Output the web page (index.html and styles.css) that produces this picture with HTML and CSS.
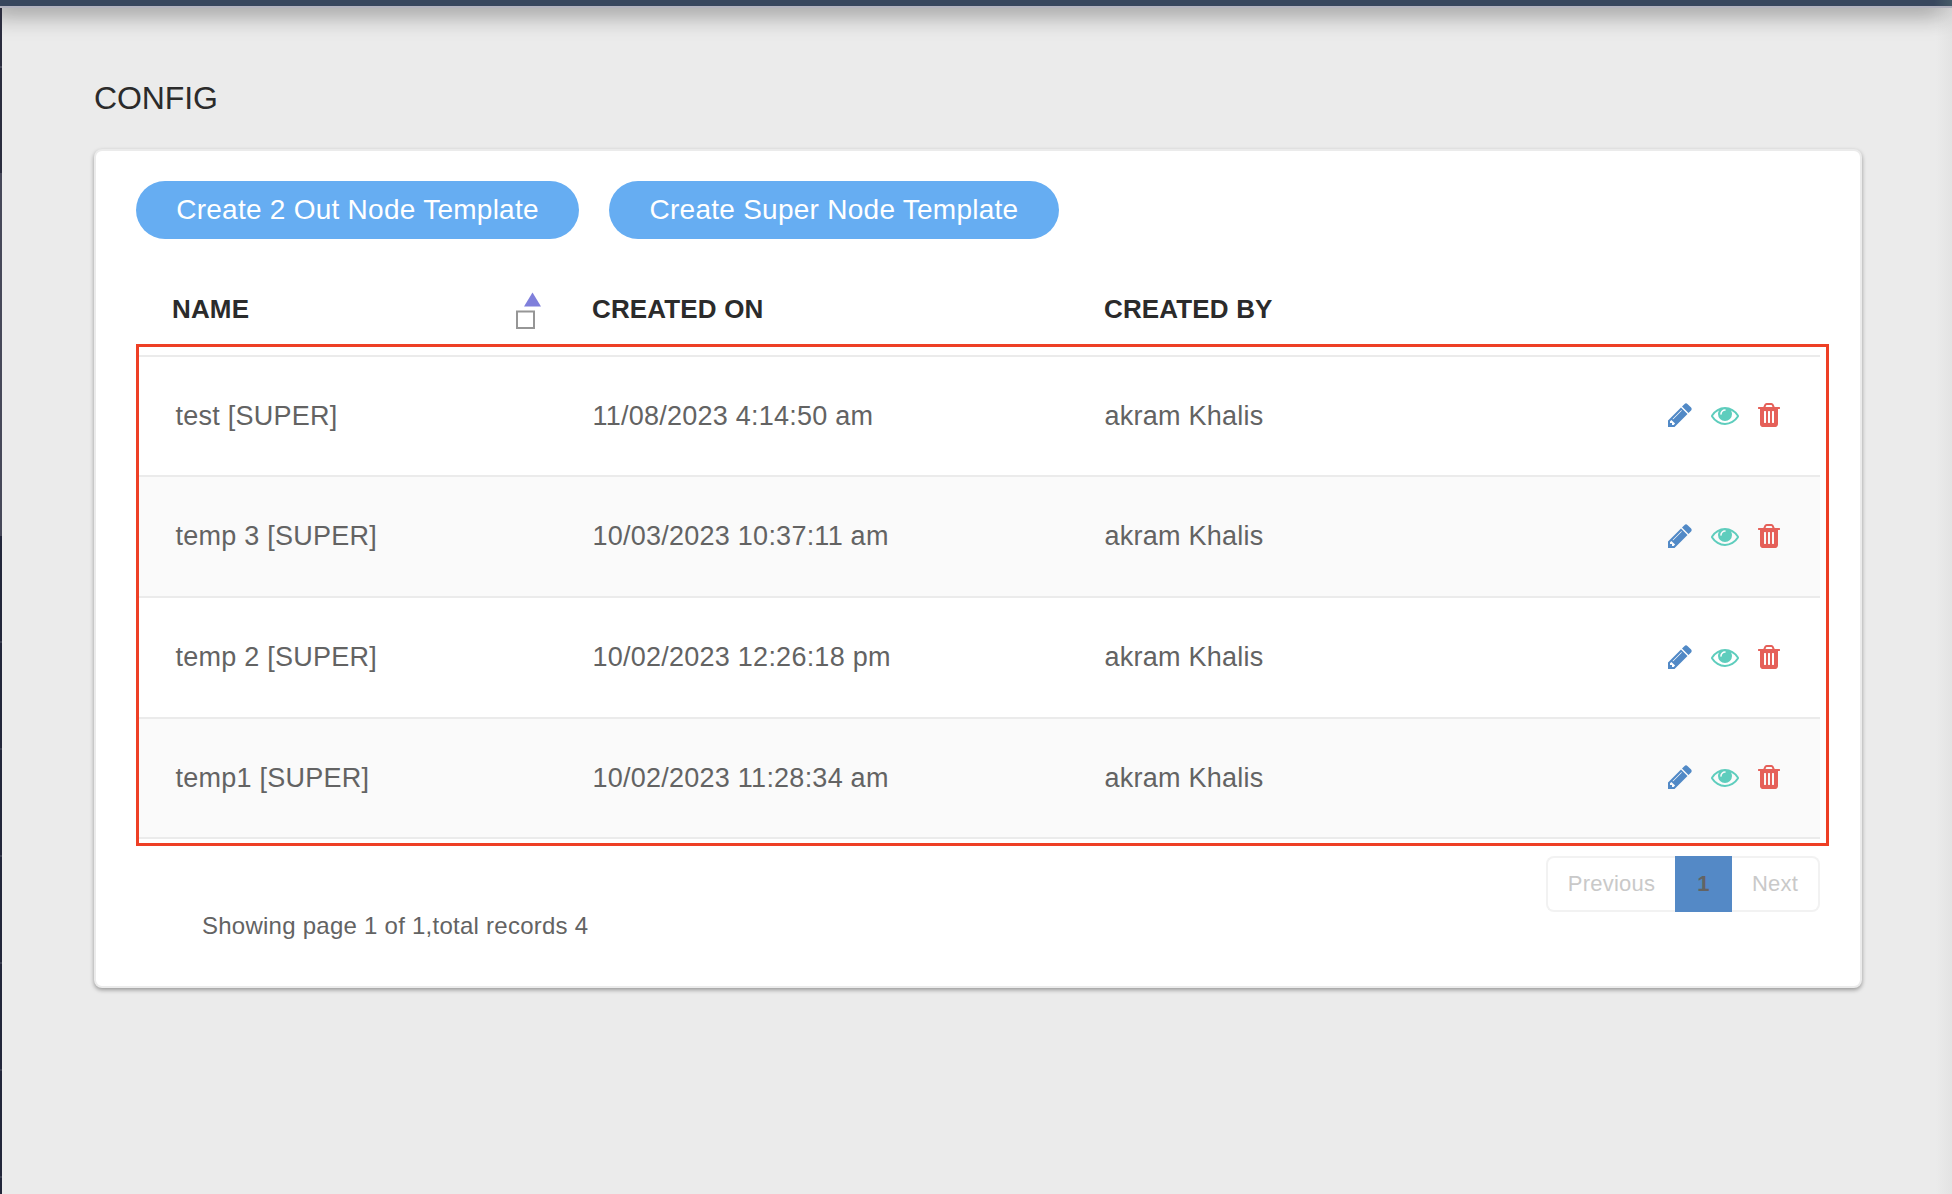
FILE: index.html
```html
<!DOCTYPE html>
<html lang="en">
<head>
<meta charset="utf-8">
<title>Config</title>
<link rel="stylesheet" href="styles.css">
</head>
<body>
<svg class="sprite" aria-hidden="true">
<symbol id="pencil" viewBox="0 0 1792 1792"><path d="M491 1536l91-91-235-235-91 91v107h128v128h107zm523-928q0-22-22-22-10 0-17 7l-542 542q-7 7-7 17 0 22 22 22 10 0 17-7l542-542q7-7 7-17zm-54-192l416 416-832 832h-416v-416zm683 96q0 53-37 90l-166 166-416-416 166-165q36-38 90-38 53 0 91 38l235 234q37 39 37 91z"/></symbol>
<symbol id="eye" viewBox="0 0 1792 1792"><path d="M1664 960q-152-236-381-353 61 104 61 225 0 185-131.5 316.5t-316.5 131.5-316.5-131.5-131.5-316.5q0-121 61-225-229 117-381 353 133 205 333.5 326.5t434.5 121.5 434.5-121.5 333.5-326.5zm-720-384q0-20-14-34t-34-14q-125 0-214.5 89.5t-89.5 214.5q0 20 14 34t34 14 34-14 14-34q0-86 61-147t147-61q20 0 34-14t14-34zm848 384q0 34-20 69-140 230-376.5 368.5t-499.5 138.5-499.5-139-376.5-368q-20-35-20-69t20-69q140-229 376.5-368t499.5-139 499.5 139 376.5 368q20 35 20 69z"/></symbol>
<symbol id="trash" viewBox="0 0 1792 1792"><path d="M704 1376v-704q0-14-9-23t-23-9h-64q-14 0-23 9t-9 23v704q0 14 9 23t23 9h64q14 0 23-9t9-23zm256 0v-704q0-14-9-23t-23-9h-64q-14 0-23 9t-9 23v704q0 14 9 23t23 9h64q14 0 23-9t9-23zm256 0v-704q0-14-9-23t-23-9h-64q-14 0-23 9t-9 23v704q0 14 9 23t23 9h64q14 0 23-9t9-23zm-544-992h448l-48-117q-7-9-17-11h-317q-10 2-17 11zm928 32v64q0 14-9 23t-23 9h-96v948q0 83-47 143.5t-113 60.5h-832q-66 0-113-58.5t-47-141.5v-952h-96q-14 0-23-9t-9-23v-64q0-14 9-23t23-9h309l70-167q15-37 54-63t79-26h320q40 0 79 26t54 63l70 167h309q14 0 23 9t9 23z"/></symbol>
</svg>
<header class="topbar"></header>
<div class="shell">
<aside class="rail"></aside>
<main class="content">
<h1 class="title">CONFIG</h1>
<section class="card">
<div class="actions">
<button class="btn">Create 2 Out Node Template</button>
<button class="btn btn-super">Create Super Node Template</button>
</div>
<div class="row head">
<div class="name">NAME<svg class="sort" viewBox="0 0 26 38"><path d="M16.5 0.5L25 14.5H8z" fill="#7f7fdb"/><path d="M1 19.5H18V36H1z" fill="none" stroke="#969696" stroke-width="2"/></svg></div>
<div>CREATED ON</div>
<div>CREATED BY</div>
</div>
<div class="frame">
<div class="row"><div>test [SUPER]</div><div>11/08/2023 4:14:50 am</div><div>akram Khalis</div><div class="tools"><svg class="edit"><use href="#pencil"/></svg><svg class="view"><use href="#eye"/></svg><svg class="del"><use href="#trash"/></svg></div></div>
<div class="row alt"><div>temp 3 [SUPER]</div><div>10/03/2023 10:37:11 am</div><div>akram Khalis</div><div class="tools"><svg class="edit"><use href="#pencil"/></svg><svg class="view"><use href="#eye"/></svg><svg class="del"><use href="#trash"/></svg></div></div>
<div class="row"><div>temp 2 [SUPER]</div><div>10/02/2023 12:26:18 pm</div><div>akram Khalis</div><div class="tools"><svg class="edit"><use href="#pencil"/></svg><svg class="view"><use href="#eye"/></svg><svg class="del"><use href="#trash"/></svg></div></div>
<div class="row alt"><div>temp1 [SUPER]</div><div>10/02/2023 11:28:34 am</div><div>akram Khalis</div><div class="tools"><svg class="edit"><use href="#pencil"/></svg><svg class="view"><use href="#eye"/></svg><svg class="del"><use href="#trash"/></svg></div></div>
</div>
<footer class="footer">
<p class="summary">Showing page 1 of 1,total records 4</p>
<nav class="pager"><span class="prev">Previous</span><span class="current">1</span><span class="next">Next</span></nav>
</footer>
</section>
</main>
</div>
</body>
</html>
```
FILE: styles.css
```css
* { box-sizing: border-box; }
body { margin: 0; height: 1194px; overflow: hidden; background: #ebebeb; color: #636363; font-family: "Liberation Sans", Arial, sans-serif; font-size: 27px; }
.sprite { display: none; }
.topbar { position: relative; height: 8px; background: linear-gradient(to left, #465a68, #38475e 18px); background-clip: padding-box; border-bottom: 2px solid #b3b3bf; box-shadow: -8px 0 26px 2px rgba(0,0,0,.65); z-index: 1; }
.shell { display: flex; height: 1186px; }
.rail { position: relative; z-index: 2; width: 2px; background: linear-gradient(transparent 58px, #464859 58px 60px, transparent 60px), linear-gradient(transparent 165px, #464859 165px 528px, transparent 528px), repeating-linear-gradient(#22263a 0 98px, #22263a 98px 105px, #3a3e50 105px 107px) 0 528px / 2px 658px no-repeat, #2a2c3e; }
.content { flex: 1; padding: 71px 90px 0 92px; background: linear-gradient(to left, #e3e3e3, #ebebeb 16px); }
.title { margin: 0; height: 70px; font-size: 32px; font-weight: 400; line-height: 38px; letter-spacing: -.1px; color: #2b2b2b; }
.card { height: 839px; padding: 30px 31px 0 40px; background: #fff; border: 2px solid #ebebeb; border-radius: 8px; box-shadow: 0 2px 4px rgba(0,0,0,.36); }
.actions { display: flex; gap: 30px; }
.btn { width: 443px; height: 58px; padding: 0; border: 0; border-radius: 29px; background: #66adf2; color: #fff; font: inherit; font-size: 28px; letter-spacing: .26px; white-space: nowrap; }
.btn-super { width: 450px; }
.row { display: grid; grid-template-columns: 417px 512px 561px 1fr; align-items: center; padding-left: 36.6px; width: 1681px; height: 121px; border-bottom: 2px solid #ebebeb; letter-spacing: .24px; }
.alt { background: #fafafa; }
.head { grid-template-columns: 420px 512px 1fr; height: 105px; padding: 36px 0 0 36px; width: auto; border: 0; color: #2b2b2b; font-size: 26px; font-weight: 700; letter-spacing: .15px; }
.name { display: flex; align-items: center; }
.sort { width: 26px; height: 38px; margin: 2px 0 0 267px; }
.frame { height: 502px; border: 3px solid #ee3f25; padding-top: 8px; }
.frame .row:first-child { border-top: 2px solid #ebebeb; height: 122px; }
.frame .row:last-child { height: 120px; }
.tools { display: flex; align-items: center; padding-bottom: 2px; fill: currentColor; }
.tools svg { width: 28px; height: 28px; }
.edit { color: #5189c6; }
.view { color: #5ecdbd; margin-left: 17.5px; }
.del { color: #e56059; margin-left: 16px; }
.footer { display: flex; justify-content: space-between; padding: 10px 9px 0 66px; }
.summary { margin: 54px 0 0; line-height: 32px; font-size: 24px; letter-spacing: .25px; }
.pager { display: flex; width: 274px; height: 56px; border-radius: 8px; font-size: 22px; line-height: 52px; letter-spacing: .25px; color: #c9c9c9; text-align: center; }
.prev { width: 129px; border: 2px solid #f2f2f2; border-right: 0; border-radius: 8px 0 0 8px; }
.current { width: 57px; line-height: 55px; background: #5489c6; color: #636363; font-weight: 700; }
.next { width: 88px; border: 2px solid #f2f2f2; border-left: 0; border-radius: 0 8px 8px 0; }
```
